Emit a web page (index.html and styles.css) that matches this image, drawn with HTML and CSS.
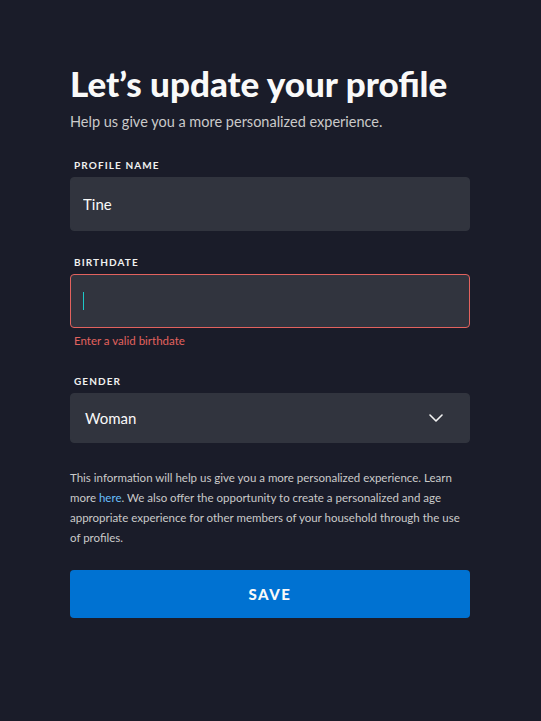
FILE: index.html
```html
<!DOCTYPE html>
<html lang="en">
<head>
    <meta charset="UTF-8">
    <meta name="viewport" content="width=device-width, initial-scale=1.0">
    <title>Update Profile</title>
    <link rel="stylesheet" href="styles.css">
</head>
<body>
    <div class="profile-container">
        <h1>Let’s update your profile</h1>
        <p class="subtitle">Help us give you a more personalized experience.</p>

        <div class="field">
            <label class="field-label" for="profileName">Profile name</label>
            <input class="field-input" id="profileName" type="text" value="Tine">
        </div>

        <div class="field">
            <label class="field-label" for="birthdate">Birthdate</label>
            <div class="field-input invalid" id="birthdate"><span class="caret"></span></div>
            <div class="error-message">Enter a valid birthdate</div>
        </div>

        <div class="field">
            <label class="field-label" for="gender">Gender</label>
            <div class="field-input select" id="gender">
                <span>Woman</span>
                <svg class="chevron" width="14" height="8" viewBox="0 0 14 8">
                    <path d="M1 1l6 6 6-6" fill="none" stroke="#f2f2f2" stroke-width="1.6" stroke-linecap="round" stroke-linejoin="round"/>
                </svg>
            </div>
        </div>

        <p class="info">This information will help us give you a more personalized experience. Learn more <a href="#">here</a>. We also offer the opportunity to create a personalized and age appropriate experience for other members of your household through the use of profiles.</p>

        <button class="save-button" type="button">Save</button>
    </div>
</body>
</html>
```

FILE: styles.css
```css
body {
    font-family: 'Lato', 'Open Sans', sans-serif;
    background-color: #1a1c29;
    color: #f9f9f9;
    margin: 0;
}

.profile-container {
    width: 400px;
    margin-left: 70px;
    padding-top: 63px;
}

h1 {
    font-size: 35px;
    font-weight: 900;
    margin: 0;
    line-height: 40px;
    color: #f9f9f9;
}

.subtitle {
    font-size: 14.5px;
    color: #cacaca;
    margin: 10px 0 29px;
}

.field {
    margin-bottom: 25px;
}

.field-label {
    display: block;
    font-size: 10px;
    font-weight: 700;
    letter-spacing: 1.1px;
    text-transform: uppercase;
    color: #f0f0f0;
    margin: 0 0 6px 4px;
}

.field-input {
    display: flex;
    align-items: center;
    box-sizing: border-box;
    width: 100%;
    height: 54px;
    padding: 0 12px;
    background-color: #31343e;
    border: 1px solid #31343e;
    border-radius: 4px;
    font-family: inherit;
    font-size: 15px;
    color: #f9f9f9;
    outline: none;
}

.field-input.invalid {
    border-color: #e2625e;
    height: 54px;
}

.caret {
    width: 1px;
    height: 18px;
    background-color: #1ec8c8;
}

.error-message {
    font-size: 11.5px;
    color: #e2625e;
    margin: 6px 0 0 4px;
    padding-bottom: 3px;
}

.field-input.select {
    height: 50px;
    justify-content: space-between;
    padding: 0 26px 0 14px;
}

.info {
    font-size: 11.5px;
    line-height: 20px;
    color: #cacaca;
    margin: 10px 0 22px;
}

.info a {
    color: #67bffc;
    text-decoration: none;
}

.save-button {
    display: block;
    width: 100%;
    height: 48px;
    background-color: #0072d2;
    color: #f9f9f9;
    border: none;
    border-radius: 4px;
    font-family: inherit;
    font-size: 15px;
    font-weight: 900;
    letter-spacing: 1.5px;
    text-transform: uppercase;
    cursor: pointer;
}
```
